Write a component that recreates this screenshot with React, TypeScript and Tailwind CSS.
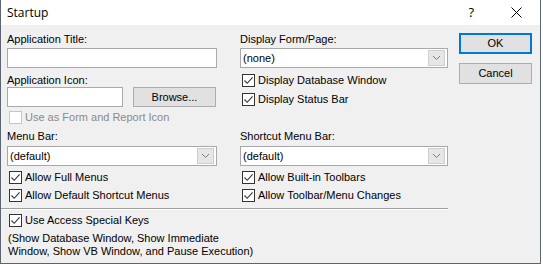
import React from "react";

const font = { fontFamily: '"Liberation Sans", Arial, sans-serif' };

function Check({ checked = true, disabled = false }: { checked?: boolean; disabled?: boolean }) {
  return (
    <div
      className={
        "w-[13px] h-[13px] shrink-0 bg-white border flex items-center justify-center " +
        (disabled ? "border-[#c6c6c6]" : "border-[#333333]")
      }
    >
      {checked && (
        <svg width="11" height="11" viewBox="0 0 11 11">
          <path d="M1.5 5.5 L4.2 8.3 L9.6 2.4" fill="none" stroke="#333333" strokeWidth="1.1" />
        </svg>
      )}
    </div>
  );
}

function CheckRow({ label, disabled = false, checked = true }: { label: string; disabled?: boolean; checked?: boolean }) {
  return (
    <div className="flex items-center h-[13px] pl-[2px]">
      <Check checked={checked} disabled={disabled} />
      <span className={"ml-[3px] text-[11px] leading-[13px] " + (disabled ? "text-[#8a8a8a]" : "text-black")}>{label}</span>
    </div>
  );
}

function Label({ text }: { text: string }) {
  return <div className="h-[13px] text-[11px] leading-[13px] text-black whitespace-nowrap">{text}</div>;
}

function Select({ value }: { value: string }) {
  return (
    <div className="h-[20px] w-full bg-white border border-[#a9a9a9] flex items-center">
      <span className="flex-1 pl-[2px] text-[11px] leading-[13px] text-black">{value}</span>
      <div className="w-[17px] h-[16px] mr-[2px] bg-[#e6e6e6] border border-[#cfcfcf] flex items-center justify-center">
        <svg width="9" height="6" viewBox="0 0 9 6">
          <path d="M1 1 L4.5 4.5 L8 1" fill="none" stroke="#7a7a7a" strokeWidth="1" />
        </svg>
      </div>
    </div>
  );
}

export default function App() {
  return (
    <div className="w-[543px] h-[265px] bg-white" style={font}>
      <div className="w-[541px] h-[264px] border-x border-b border-[#5d6573] bg-[#f0f0f0] flex flex-col">
        {/* Title bar */}
        <div className="h-[25px] bg-white flex items-center shrink-0">
          <span className="ml-[6px] text-[12px] text-black" style={{ fontFamily: '"Open Sans", "Noto Sans", sans-serif' }}>
            Startup
          </span>
          <span className="ml-auto mr-[37px] text-[13px] text-black" style={{ fontFamily: '"Open Sans", sans-serif' }}>
            ?
          </span>
          <svg width="11" height="11" viewBox="0 0 11 11" className="mr-[18px]">
            <path d="M0.5 0.5 L10.5 10.5 M10.5 0.5 L0.5 10.5" stroke="#000" strokeWidth="1" />
          </svg>
        </div>
        {/* Body */}
        <div className="flex flex-1">
          <div className="w-[447px] flex flex-col">
            {/* top section */}
            <div className="flex pl-[6px] pt-[8px]">
              <div className="w-[210px] flex flex-col">
                <Label text="Application Title:" />
                <div className="mt-[2px] h-[20px] bg-white border border-[#a9a9a9]" />
                <div className="mt-[6px]">
                  <Label text="Application Icon:" />
                </div>
                <div className="flex">
                  <div className="w-[116px] h-[20px] bg-white border border-[#a9a9a9]" />
                  <div className="ml-[10px] w-[83px] h-[20px] bg-[#e1e1e1] border border-[#adadad] flex items-center justify-center text-[11px] text-black">
                    Browse...
                  </div>
                </div>
                <div className="mt-[4px]">
                  <CheckRow label="Use as Form and Report Icon" disabled checked={false} />
                </div>
              </div>
              <div className="ml-[23px] w-[208px] flex flex-col">
                <Label text="Display Form/Page:" />
                <div className="mt-[2px]">
                  <Select value="(none)" />
                </div>
                <div className="mt-[6px] flex flex-col gap-[6px]">
                  <CheckRow label="Display Database Window" />
                  <CheckRow label="Display Status Bar" />
                </div>
              </div>
            </div>
            {/* middle section */}
            <div className="flex pl-[6px] mt-[6px]">
              <div className="w-[210px] flex flex-col">
                <Label text="Menu Bar:" />
                <div className="mt-[3px]">
                  <Select value="(default)" />
                </div>
                <div className="mt-[5px] flex flex-col gap-[5px]">
                  <CheckRow label="Allow Full Menus" />
                  <CheckRow label="Allow Default Shortcut Menus" />
                </div>
              </div>
              <div className="ml-[23px] w-[208px] flex flex-col">
                <Label text="Shortcut Menu Bar:" />
                <div className="mt-[3px]">
                  <Select value="(default)" />
                </div>
                <div className="mt-[5px] flex flex-col gap-[5px]">
                  <CheckRow label="Allow Built-in Toolbars" />
                  <CheckRow label="Allow Toolbar/Menu Changes" />
                </div>
              </div>
            </div>
            {/* separator */}
            <div className="mt-[6px] h-[2px] border-t border-[#a0a0a0] border-b border-b-white" />
            <div className="pl-[6px] mt-[4px]">
              <CheckRow label="Use Access Special Keys" />
              <div className="mt-[5px] text-[11px] leading-[13px] text-black pl-[1px]">
                (Show Database Window, Show Immediate
                <br />
                Window, Show VB Window, and Pause Execution)
              </div>
            </div>
          </div>
          {/* buttons */}
          <div className="ml-[11px] pt-[8px] flex flex-col">
            <div className="w-[73px] h-[21px] bg-[#e1e1e1] border-2 border-[#0078d7] flex items-center justify-center text-[11px] text-black">
              OK
            </div>
            <div className="mt-[9px] w-[73px] h-[21px] bg-[#e1e1e1] border border-[#adadad] flex items-center justify-center text-[11px] text-black">
              Cancel
            </div>
          </div>
        </div>
      </div>
    </div>
  );
}
